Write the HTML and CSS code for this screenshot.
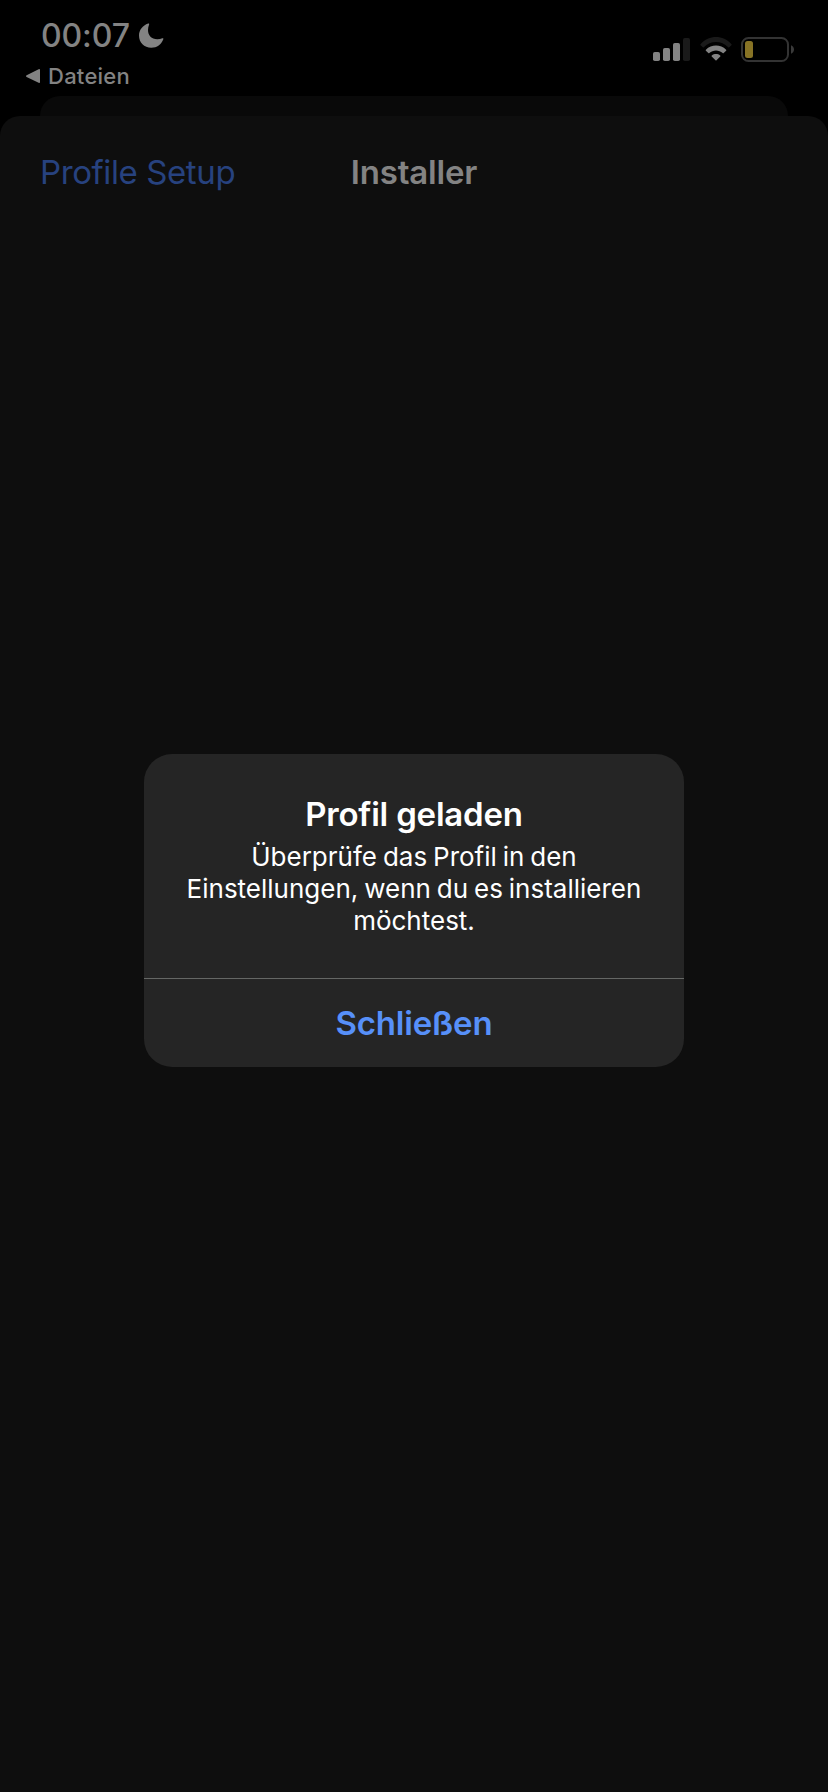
FILE: index.html
```
<!doctype html>
<html lang="de">
  <head>
    <meta charset="UTF-8" />
    <meta name="viewport" content="width=device-width, initial-scale=1.0" />
    <title>Installer</title>
    <link rel="stylesheet" href="styles.css">
  </head>
  <body>
    <header class="status">
      <div class="status-left">
        <div class="clock">
          <span class="time">00:07</span>
          <svg class="moon" width="25" height="25" viewBox="0 0 25 25">
            <path d="M9.2 0.5C9.9 0.2 10.4 0.8 10.1 1.5C9.4 3.2 9 5 9 7C9 12.6 12.6 16.2 18.2 16.2C20.2 16.2 21.9 15.8 23.3 15.3C24.1 15 24.6 15.5 24.3 16.3C22.4 21.5 18 24.8 12.3 24.8C5.2 24.8 0 19.7 0 12.6C0 7 3.6 2.5 9.2 0.5Z" />
          </svg>
        </div>
        <a class="back">
          <svg width="15" height="14" viewBox="0 0 15 14">
            <path d="M0.6 6.3L12.6 0.2Q14 -0.4 14 1V13Q14 14.4 12.6 13.8L0.6 7.9Q-0.6 7.1 0.6 6.3Z" />
          </svg>
          <span>Dateien</span>
        </a>
      </div>
      <div class="status-right">
        <svg class="signal" width="37" height="23" viewBox="0 0 37 23">
          <rect x="0" y="14" width="7" height="9" rx="1.8" />
          <rect x="10" y="10" width="7" height="13" rx="1.8" />
          <rect x="20" y="5" width="7" height="18" rx="1.8" />
          <rect class="off" x="30" y="0" width="7" height="23" rx="1.8" />
        </svg>
        <svg class="wifi" width="32" height="24" viewBox="0 0 32 24">
          <path class="off" d="M0.5 7.2C9 -2.3 23 -2.3 31.5 7.2Q31.9 7.7 31.4 8.2L29.2 10.3Q28.7 10.7 28.2 10.2C21.5 3.3 10.5 3.3 3.8 10.2Q3.3 10.7 2.8 10.3L0.6 8.2Q0.1 7.7 0.5 7.2Z" />
          <path d="M5.9 12.7C11.5 7.2 20.5 7.2 26.1 12.7Q26.6 13.2 26.1 13.7L23.7 16Q23.2 16.4 22.7 16C18.9 12.6 13.1 12.6 9.3 16Q8.8 16.4 8.3 16L5.9 13.7Q5.4 13.2 5.9 12.7Z" />
          <path d="M11.8 18.4C14.2 16.6 17.8 16.6 20.2 18.4Q20.8 18.9 20.3 19.4L16.5 23.3Q16 23.8 15.5 23.3L11.7 19.4Q11.2 18.9 11.8 18.4Z" />
        </svg>
        <svg class="battery" width="54" height="25" viewBox="0 0 54 25">
          <rect class="case" x="1" y="1" width="46" height="23" rx="6.5" />
          <rect class="level" x="4" y="4" width="8" height="17" rx="2.5" />
          <path class="nub" d="M50 8.2C54 9.8 54 15.2 50 16.8Z" />
        </svg>
      </div>
    </header>

    <div class="sheet-behind"></div>
    <main class="sheet">
      <nav class="navbar">
        <a class="nav-back">Profile Setup</a>
        <h1>Installer</h1>
      </nav>
      <div class="alert">
        <div class="alert-body">
          <h2>Profil geladen</h2>
          <p>Überprüfe das Profil in den<br />Einstellungen, wenn du es installieren<br />möchtest.</p>
        </div>
        <button class="alert-button">Schließen</button>
      </div>
    </main>
  </body>
</html>
```
FILE: styles.css
```
:root {
  --gray: #838383;
  --off: #1a1a1a;
  --sheet: #0e0e0e;
}

* {
  box-sizing: border-box;
}

body {
  margin: 0;
  height: 1792px;
  display: flex;
  flex-direction: column;
  overflow: hidden;
  font-family: Inter, sans-serif;
  color: var(--gray);
  background-color: #000;
}

h1,
h2,
p {
  margin: 0;
}

svg {
  display: block;
  fill: currentColor;
}

.off {
  fill: var(--off);
}

.status {
  height: 96px;
  display: flex;
  justify-content: space-between;
}

.status-left {
  padding: 16px 0 0 26px;
}

.clock {
  display: flex;
  padding-left: 15px;
  height: 40px;
  line-height: 40px;
}

.time {
  width: 98px;
  font-size: 32px;
  font-weight: 550;
  letter-spacing: -0.1px;
  white-space: nowrap;
}

.moon {
  margin-top: 7px;
}

.back {
  display: flex;
  align-items: center;
  gap: 7px;
  height: 40px;
  font-size: 22px;
  font-weight: 500;
  letter-spacing: 0.25px;
}

.status-right {
  display: flex;
  padding: 37px 33px 0 0;
}

.signal {
  margin: 1px 10px 0 0;
}

.wifi {
  margin-right: 9px;
}

.case {
  fill: none;
  stroke: #333;
  stroke-width: 2;
}

.level {
  fill: #877325;
}

.nub {
  fill: #3a3a3a;
}

.sheet-behind {
  height: 20px;
  margin: 0 40px;
  border-radius: 20px 20px 0 0;
  background-color: #090909;
}

.sheet {
  flex: 1;
  display: flex;
  flex-direction: column;
  align-items: center;
  border-radius: 20px 20px 0 0;
  background-color: var(--sheet);
}

.navbar {
  width: 100%;
  height: 112px;
  display: grid;
  grid-template-columns: 1fr auto 1fr;
  align-items: center;
  padding: 0 40px;
  font-size: 33px;
}

.nav-back {
  letter-spacing: -0.4px;
  color: #27427f;
}

h1 {
  font-size: 33px;
  font-weight: 600;
  letter-spacing: -0.2px;
}

.alert {
  width: 540px;
  height: 313px;
  margin-top: 526px;
  display: flex;
  flex-direction: column;
  border-radius: 28px;
  overflow: hidden;
  color: #fff;
  background-color: #252525;
}

.alert-body {
  height: 225px;
  padding-top: 40px;
  text-align: center;
  border-bottom: 1px solid #656765;
}

h2 {
  font-size: 33px;
  font-weight: 600;
  line-height: 40px;
  letter-spacing: -0.2px;
}

.alert-body p {
  margin-top: 7px;
  font-size: 26px;
  line-height: 32px;
  word-spacing: -1.4px;
  white-space: nowrap;
}

.alert-button {
  flex: 1;
  padding: 0;
  border: 0;
  font: 600 33px Inter, sans-serif;
  letter-spacing: -0.2px;
  color: #5790f9;
  background: none;
}
```
